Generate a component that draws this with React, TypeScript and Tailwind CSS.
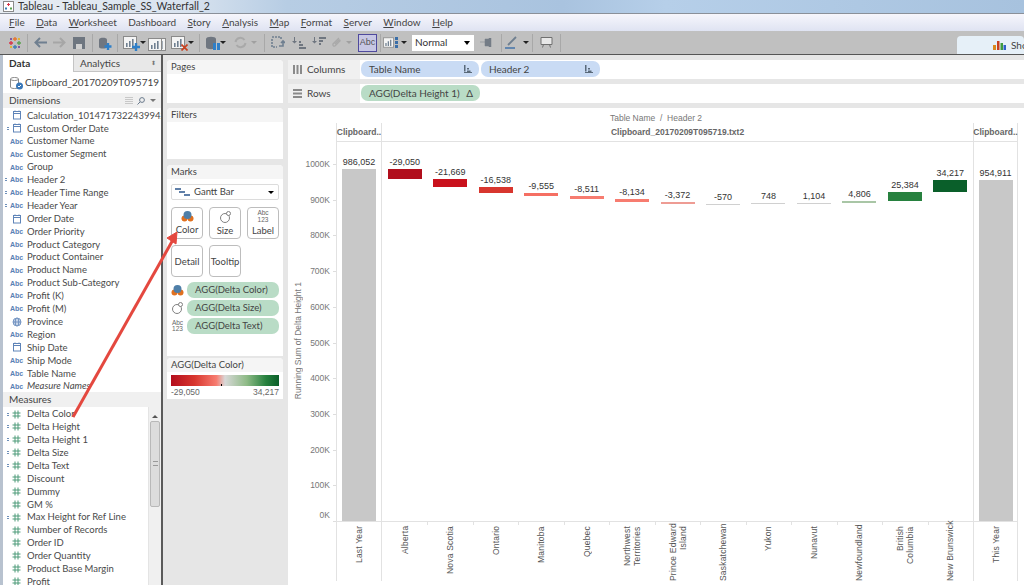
import type { ReactNode } from 'react'

const sans = "font-['Lato','Open_Sans',sans-serif]"
const arial = "font-['Liberation_Sans',Arial,sans-serif]"

const menu = ['File', 'Data', 'Worksheet', 'Dashboard', 'Story', 'Analysis', 'Map', 'Format', 'Server', 'Window', 'Help']

type FieldKind = 'date' | 'abc' | 'geo' | 'num'
type Field = { name: string; kind: FieldKind; calc?: boolean; italic?: boolean }

const dimensions: Field[] = [
  { name: 'Calculation_1014717322439942...', kind: 'date' },
  { name: 'Custom Order Date', kind: 'date', calc: true },
  { name: 'Customer Name', kind: 'abc' },
  { name: 'Customer Segment', kind: 'abc' },
  { name: 'Group', kind: 'abc' },
  { name: 'Header 2', kind: 'abc', calc: true },
  { name: 'Header Time Range', kind: 'abc', calc: true },
  { name: 'Header Year', kind: 'abc', calc: true },
  { name: 'Order Date', kind: 'date' },
  { name: 'Order Priority', kind: 'abc' },
  { name: 'Product Category', kind: 'abc' },
  { name: 'Product Container', kind: 'abc' },
  { name: 'Product Name', kind: 'abc' },
  { name: 'Product Sub-Category', kind: 'abc' },
  { name: 'Profit (K)', kind: 'abc' },
  { name: 'Profit (M)', kind: 'abc' },
  { name: 'Province', kind: 'geo' },
  { name: 'Region', kind: 'abc' },
  { name: 'Ship Date', kind: 'date' },
  { name: 'Ship Mode', kind: 'abc' },
  { name: 'Table Name', kind: 'abc' },
  { name: 'Measure Names', kind: 'abc', italic: true },
]

const measures: Field[] = [
  { name: 'Delta Color', kind: 'num', calc: true },
  { name: 'Delta Height', kind: 'num', calc: true },
  { name: 'Delta Height 1', kind: 'num', calc: true },
  { name: 'Delta Size', kind: 'num', calc: true },
  { name: 'Delta Text', kind: 'num', calc: true },
  { name: 'Discount', kind: 'num' },
  { name: 'Dummy', kind: 'num' },
  { name: 'GM %', kind: 'num' },
  { name: 'Max Height for Ref Line', kind: 'num', calc: true },
  { name: 'Number of Records', kind: 'num' },
  { name: 'Order ID', kind: 'num' },
  { name: 'Order Quantity', kind: 'num' },
  { name: 'Product Base Margin', kind: 'num' },
  { name: 'Profit', kind: 'num' },
]

const provinces = [
  { name: ['Alberta'], value: -29050, label: '-29,050', color: '#b10e1c' },
  { name: ['Nova Scotia'], value: -21669, label: '-21,669', color: '#c9111c' },
  { name: ['Ontario'], value: -16538, label: '-16,538', color: '#d8362e' },
  { name: ['Manitoba'], value: -9555, label: '-9,555', color: '#f56f63' },
  { name: ['Quebec'], value: -8511, label: '-8,511', color: '#f77c70' },
  { name: ['Northwest', 'Territories'], value: -8134, label: '-8,134', color: '#f77c70' },
  { name: ['Prince Edward', 'Island'], value: -3372, label: '-3,372', color: '#ee9c94' },
  { name: ['Saskatchewan'], value: -570, label: '-570', color: '#d0d0d0' },
  { name: ['Yukon'], value: 748, label: '748', color: '#d0d0d0' },
  { name: ['Nunavut'], value: 1104, label: '1,104', color: '#d0d0d0' },
  { name: ['Newfoundland'], value: 4806, label: '4,806', color: '#a9c6a6' },
  { name: ['British', 'Columbia'], value: 25384, label: '25,384', color: '#27813f' },
  { name: ['New Brunswick'], value: 34217, label: '34,217', color: '#0a5f2a' },
]

const axisTicks = [1000, 900, 800, 700, 600, 500, 400, 300, 200, 100, 0]

// plot is 379px tall, 100K is 35.7px
const yOf = (v: number) => 379 - v * 0.000357

function DateIcon() {
  return (
    <svg width="10" height="10" viewBox="0 0 10 10" fill="none" stroke="#5f84b8">
      <rect x="1.5" y="1.5" width="7" height="7.5" />
      <path d="M1.5 3.5h7M3 .5v1.5M7 .5v1.5" />
    </svg>
  )
}

function GeoIcon() {
  return (
    <svg width="10" height="10" viewBox="0 0 10 10" fill="#c8d6ea" stroke="#5f84b8" strokeWidth=".8">
      <circle cx="5" cy="5" r="4" />
      <ellipse cx="5" cy="5" rx="1.8" ry="4" />
      <path d="M1 5h8" />
    </svg>
  )
}

function HashIcon() {
  return (
    <svg width="9" height="9" viewBox="0 0 9 9" fill="none" stroke="#4d9a78">
      <path d="M3 .5v8M6 .5v8M.5 3h8M.5 6h8" />
    </svg>
  )
}

function FieldRow({ field }: { field: Field }) {
  const isAbc = field.kind === 'abc'
  return (
    <li className="flex h-[12.9px] items-center">
      <span className="relative flex w-[24px] shrink-0 items-center justify-center pl-[3px]">
        {field.calc && (
          <span className={`absolute flex flex-col gap-px ${isAbc ? 'left-[2px]' : 'left-[4px]'}`}>
            <span className="h-px w-[2px] bg-[#6d8fb9]" />
            <span className="h-px w-[2px] bg-[#6d8fb9]" />
          </span>
        )}
        {field.kind === 'date' && <DateIcon />}
        {field.kind === 'geo' && <GeoIcon />}
        {field.kind === 'num' && <HashIcon />}
        {isAbc && <span className={`${arial} text-[7px] font-bold leading-none text-[#5a7fb5]`}>Abc</span>}
      </span>
      <span className={`whitespace-nowrap text-[9.5px] leading-none text-[#4a4a4a] ${field.italic ? 'italic' : ''}`}>
        {field.name}
      </span>
    </li>
  )
}

function Caret() {
  return <span className="ml-[3px] h-0 w-0 border-x-[3px] border-t-[3px] border-x-transparent border-t-[#222]" />
}

function Sep() {
  return <span className="mx-[2.5px] h-[18px] w-px shrink-0 bg-[#a8a8a8]" />
}

function Slot({ w, children }: { w: number; children?: ReactNode }) {
  return (
    <span className="flex shrink-0 items-center justify-center" style={{ width: w }}>
      {children}
    </span>
  )
}

function ChartGlyph({ color = '#6f7f90', frame = true }: { color?: string; frame?: boolean }) {
  return (
    <svg width="14" height="13" viewBox="0 0 14 13">
      {frame && <rect x=".5" y=".5" width="13" height="12" fill="#f4f4f4" stroke="#8a8a8a" />}
      <path d="M3 11V7h1.6v4zM6 11V5h1.6v6zM9 11V3h1.6v8z" fill={color} />
    </svg>
  )
}

function Toolbar() {
  return (
    <div className="flex h-[23px] items-center bg-[#c0c0c0] pl-[6px]">
      <Slot w={18}>
        <svg width="14" height="14" viewBox="0 0 14 14" strokeWidth="1.3">
          <path d="M7 1v4M5 3h4" stroke="#e8762b" />
          <path d="M7 9v4M5 11h4" stroke="#3a7db5" />
          <path d="M3 5v4M1 7h4" stroke="#d8344a" />
          <path d="M11 5v4M9 7h4" stroke="#59a14f" />
          <path d="M3 2v2M2 3h2M11 10v2M10 11h2" stroke="#7a4fa0" />
          <path d="M11 2v2M10 3h2M3 10v2M2 11h2" stroke="#e2b32d" />
        </svg>
      </Slot>
      <Sep />
      <Slot w={20}>
        <svg width="13" height="11" viewBox="0 0 13 11" fill="none" stroke="#6f7f90" strokeWidth="2">
          <path d="M13 5.5H2M6 1 1.5 5.5 6 10" />
        </svg>
      </Slot>
      <Slot w={19}>
        <svg width="13" height="11" viewBox="0 0 13 11" fill="none" stroke="#a6a6a6" strokeWidth="2">
          <path d="M0 5.5h11M7 1l4.5 4.5L7 10" />
        </svg>
      </Slot>
      <Slot w={20}>
        <svg width="12" height="12" viewBox="0 0 12 12">
          <rect width="12" height="12" fill="#6e7680" />
          <rect x="3" y="7" width="6" height="5" fill="#d0d0d0" />
        </svg>
      </Slot>
      <Sep />
      <Slot w={19}>
        <svg width="14" height="14" viewBox="0 0 14 14">
          <path d="M1 3.5C1 1 9 1 9 3.5V11C9 13 1 13 1 11z" fill="#6f7680" />
          <path d="M10 7v7M6.5 10.5h7" stroke="#2f7fc8" strokeWidth="2.4" />
        </svg>
      </Slot>
      <Sep />
      <Slot w={28}>
        <span className="relative flex">
          <ChartGlyph />
          <svg className="absolute -right-[3px] -bottom-[2px]" width="8" height="8" viewBox="0 0 8 8">
            <path d="M4 0v8M0 4h8" stroke="#2f7fc8" strokeWidth="2.4" />
          </svg>
        </span>
        <Caret />
      </Slot>
      <Slot w={21}>
        <span className="relative flex pt-[3px]">
          <ChartGlyph />
          <span className="absolute -left-[4px] bottom-0 flex">
            <ChartGlyph />
          </span>
        </span>
      </Slot>
      <Slot w={27}>
        <span className="relative flex">
          <ChartGlyph />
          <svg className="absolute -right-[3px] -bottom-[2px]" width="7" height="7" viewBox="0 0 7 7">
            <path d="M.5.5l6 6M6.5.5l-6 6" stroke="#c8401e" strokeWidth="1.6" />
          </svg>
        </span>
        <Caret />
      </Slot>
      <Sep />
      <Slot w={27}>
        <span className="relative flex">
          <svg width="11" height="14" viewBox="0 0 11 14">
            <path d="M0 3C0 0 10 0 10 3v8c0 3-10 3-10 0z" fill="#6f7680" />
          </svg>
          <span className="absolute -right-[3px] bottom-0 flex gap-px">
            <span className="h-[7px] w-[3px] bg-[#2f7fc8]" />
            <span className="h-[7px] w-[3px] bg-[#2f7fc8]" />
          </span>
        </span>
        <Caret />
      </Slot>
      <Slot w={22}>
        <svg width="13" height="13" viewBox="0 0 13 13" fill="none" stroke="#a9a9a9" strokeWidth="2">
          <path d="M1.5 6a5 5 0 0 1 9-2M11.5 7a5 5 0 0 1-9 2" />
        </svg>
      </Slot>
      <span className="w-[10px]">
        <span className="block h-0 w-0 border-x-[3px] border-t-[3px] border-x-transparent border-t-[#a0a0a0]" />
      </span>
      <Sep />
      <Slot w={22}>
        <svg width="14" height="13" viewBox="0 0 14 13" fill="none" stroke="#6f7f90" strokeWidth="1.6">
          <path d="M1 1h9v2M1 3v8h5" strokeDasharray="2 1" />
          <path d="M8 10h4V5M10 7l2-2 2 2" />
        </svg>
      </Slot>
      <Slot w={20}>
        <svg width="14" height="12" viewBox="0 0 14 12" fill="#6f7680">
          <path d="M2 0h1v4h2L2.5 6.5 0 4h2zM7 4h2v2H7zM7 7h4v2H7zM7 10h7v2H7z" />
        </svg>
      </Slot>
      <Slot w={20}>
        <svg width="14" height="12" viewBox="0 0 14 12" fill="#6f7680">
          <path d="M2 0h1v4h2L2.5 6.5 0 4h2zM7 0h7v2H7zM7 3h4v2H7zM7 6h2v2H7z" />
        </svg>
      </Slot>
      <Slot w={14}>
        <svg width="11" height="12" viewBox="0 0 11 12" fill="none" stroke="#a9a9a9" strokeWidth="1.3">
          <path d="M8 1 2 7a1.5 1.5 0 0 0 2 2l5-5a.8.8 0 0 0-1-1L4 7" />
        </svg>
      </Slot>
      <span className="ml-[3px] w-[12px]">
        <span className="block h-0 w-0 border-x-[3px] border-t-[3px] border-x-transparent border-t-[#a0a0a0]" />
      </span>
      <span
        className={`${arial} flex h-[18px] w-[19px] shrink-0 items-center justify-center border border-[#4f4a9e] bg-[#c7c7e4] text-[9px] text-[#555]`}
      >
        Abc
      </span>
      <Sep />
      <Slot w={24}>
        <ChartGlyph />
        <span className="ml-px grid gap-px">
          <span className="h-[3px] w-[3px] bg-[#3a6ea8]" />
          <span className="h-[3px] w-[3px] bg-[#3a6ea8]" />
          <span className="h-[3px] w-[3px] bg-[#3a6ea8]" />
        </span>
        <Caret />
      </Slot>
      <span
        className={`${sans} ml-[5px] flex h-[16px] w-[62px] shrink-0 items-center justify-between bg-white pl-[3px] pr-[4px] text-[10px] text-[#333]`}
      >
        Normal
        <span className="h-0 w-0 border-x-[3.5px] border-t-[4px] border-x-transparent border-t-black" />
      </span>
      <Slot w={24}>
        <svg width="13" height="9" viewBox="0 0 13 9">
          <path d="M0 4h5M9 0h2v9H9zM5 1h4v7H5z" fill="#747c86" stroke="#747c86" strokeWidth=".5" />
        </svg>
      </Slot>
      <Sep />
      <Slot w={16}>
        <svg width="14" height="13" viewBox="0 0 14 13" fill="none" stroke="#6f7f90" strokeWidth="1.8">
          <path d="M3 9 11 1" />
          <path d="M0 12h10" stroke="#3a6ea8" strokeWidth="1.4" />
        </svg>
      </Slot>
      <Caret />
      <Sep />
      <Slot w={22}>
        <svg width="13" height="13" viewBox="0 0 13 13" fill="#e8e8e8" stroke="#707070">
          <path d="M1 1.5h11v7H1zM3.5 8.5l-1 3M9.5 8.5l1 3" />
        </svg>
      </Slot>
      <Sep />
      <div className="ml-auto flex h-[18px] w-[67px] items-end self-end">
        <div className="flex h-full w-full items-center justify-end gap-[5px] rounded-t-[4px] bg-[#e6f0f8] pl-2">
          <svg width="13" height="9" viewBox="0 0 13 9">
            <rect x="0" y="4" width="3" height="5" fill="#d98a1f" />
            <rect x="4" y="0" width="2.5" height="9" fill="#c9401f" />
            <rect x="7.5" y="2" width="2.5" height="7" fill="#3f9a3f" />
            <rect x="10.5" y="4" width="2.5" height="5" fill="#2f5fc8" />
          </svg>
          <span className={`${sans} w-[13px] overflow-hidden text-[10px] text-[#444]`}>Sho</span>
        </div>
      </div>
    </div>
  )
}

function DataPanel() {
  return (
    <aside className={`${sans} flex w-[161px] shrink-0 flex-col border-l-[3px] border-[#b8c2cf] bg-white`}>
      <div className="flex h-[17px] shrink-0 text-[10px] text-[#444]">
        <div className="flex w-[70px] items-center bg-white pl-[6px] font-bold text-[#333]">Data</div>
        <div className="flex flex-1 items-center justify-between border-b border-l border-[#c4c4c4] bg-[#e8e8e8] pl-[6px] pr-[5px]">
          Analytics
          <span className="text-[6px] leading-none text-[#777]">⬍</span>
        </div>
      </div>
      <div className="flex h-[21px] shrink-0 items-center gap-px pl-[6px] text-[10px] text-[#444]">
        <svg width="15" height="14" viewBox="0 0 15 14">
          <path d="M1.5 3C1.5 1 9.5 1 9.5 3v8c0 2-8 2-8 0z" fill="#fff" stroke="#8a8a8a" />
          <path d="M1.5 3c0 2 8 2 8 0" fill="none" stroke="#8a8a8a" />
          <circle cx="10.5" cy="10" r="3.5" fill="#3a78b8" />
          <path d="M9 10l1 1 2-2" fill="none" stroke="#fff" />
        </svg>
        Clipboard_20170209T095719
      </div>
      <div className="flex h-[15px] shrink-0 items-center justify-between bg-[#f0f0f0] pl-[6px] pr-[5px] text-[10px] text-[#444]">
        Dimensions
        <span className="flex items-center gap-[3px]">
          <svg width="9" height="7" viewBox="0 0 9 7" stroke="#a0a0a0">
            <path d="M1 0v7M3 0v7M5 0v7M7 0v7" strokeDasharray="1 1" />
          </svg>
          <svg width="8" height="8" viewBox="0 0 8 8" fill="none" stroke="#6a7a8c">
            <circle cx="5" cy="3" r="2.4" />
            <path d="M3 5 .5 7.5" />
          </svg>
          <span className="ml-[2px] h-0 w-0 border-x-[3px] border-t-[3px] border-x-transparent border-t-[#777]" />
        </span>
      </div>
      <ul className="shrink-0 pt-px">
        {dimensions.map((f) => (
          <FieldRow key={f.name} field={f} />
        ))}
      </ul>
      <div className="mt-[-1px] flex h-[15px] shrink-0 items-center bg-[#f0f0f0] pl-[6px] text-[10px] text-[#444]">
        Measures
      </div>
      <div className="flex min-h-0 flex-1">
        <ul className="flex-1 pt-px">
          {measures.map((f) => (
            <FieldRow key={f.name} field={f} />
          ))}
        </ul>
        <div className="flex w-[13px] flex-col items-center border-l border-[#e4e4e4] bg-[#f0f0f0] pt-[8px]">
          <span className="h-0 w-0 border-x-[3px] border-b-[3px] border-x-transparent border-b-[#555]" />
          <span className="mt-[3px] flex h-[86px] w-[10px] items-center justify-center rounded-[2px] border border-[#b8b8b8] bg-[#dcdcdc]">
            <span className="h-[5px] w-[5px] border-y border-[#999]" />
          </span>
        </div>
      </div>
    </aside>
  )
}

function Card({ title, className, children }: { title: string; className: string; children?: ReactNode }) {
  return (
    <section className={`flex shrink-0 flex-col overflow-hidden rounded-t-[4px] bg-white ${className}`}>
      <h3 className="flex h-[14px] shrink-0 items-center bg-[#f5f5f5] pl-[4px] text-[9.5px] font-normal text-[#444]">
        {title}
      </h3>
      {children}
    </section>
  )
}

function MarkButton({ label, children }: { label: string; children?: ReactNode }) {
  return (
    <div className="flex h-[32px] w-[32px] flex-col items-center justify-center gap-[2px] rounded-[4px] border border-[#bdbdbd] bg-white text-[9.5px] leading-[11px] text-[#444]">
      {children}
      {label}
    </div>
  )
}

function ColorIcon() {
  return (
    <svg width="13" height="11" viewBox="0 0 13 11" className="shrink-0">
      <circle cx="3.5" cy="7.5" r="3" fill="#e0701f" />
      <circle cx="9.5" cy="7.5" r="3" fill="#e0701f" />
      <circle cx="6.5" cy="4" r="4" fill="#4f7fa8" />
    </svg>
  )
}

function SizeIcon() {
  return (
    <svg width="13" height="12" viewBox="0 0 13 12" fill="#fff" stroke="#808080" className="shrink-0">
      <circle cx="6" cy="7" r="4.5" />
      <circle cx="9.5" cy="2.5" r="2" />
    </svg>
  )
}

function LabelIcon() {
  return (
    <span className={`${arial} shrink-0 text-center text-[6.5px] leading-[6.5px] text-[#666]`}>
      Abc
      <br />
      123
    </span>
  )
}

function Pill({ icon, label }: { icon: ReactNode; label: string }) {
  return (
    <div className="flex h-[16px] items-center gap-[3px]">
      <span className="flex w-[13px] shrink-0 justify-center">{icon}</span>
      <span className="flex h-full flex-1 items-center rounded-[7px] bg-[#b9dcc6] pl-[8px] text-[9.5px] text-[#444]">
        {label}
      </span>
    </div>
  )
}

function Cards() {
  return (
    <div className={`${sans} flex w-[127px] shrink-0 flex-col border-l-2 border-[#5a5a5a] bg-[#e6e6e6] pl-[4px] pr-[5px] pt-[5px]`}>
      <Card title="Pages" className="h-[43px]" />
      <Card title="Filters" className="mt-[5px] h-[51px]" />
      <Card title="Marks" className="mt-[6px] h-[191px]">
        <div className="px-[4px] pt-[5px]">
          <div className="flex h-[16px] items-center justify-between rounded-[2px] border border-[#dcdcdc] pl-[3px] pr-[4px] text-[9.5px] text-[#444]">
            <span className="flex items-center gap-[4px]">
              <svg width="15" height="8" viewBox="0 0 15 8" fill="#5f7fa8">
                <path d="M0 0h6v2H0zM4 3h6v2H4zM9 6h6v2H9z" />
              </svg>
              Gantt Bar
            </span>
            <span className="h-0 w-0 border-x-[3px] border-t-[3px] border-x-transparent border-t-black" />
          </div>
          <div className="mt-[7px] grid grid-cols-[32px_32px_32px] gap-x-[6px] gap-y-[6px]">
            <MarkButton label="Color">
              <ColorIcon />
            </MarkButton>
            <MarkButton label="Size">
              <SizeIcon />
            </MarkButton>
            <MarkButton label="Label">
              <LabelIcon />
            </MarkButton>
            <MarkButton label="Detail" />
            <MarkButton label="Tooltip" />
          </div>
          <div className="mt-[5px] flex flex-col gap-[2px]">
            <Pill icon={<ColorIcon />} label="AGG(Delta Color)" />
            <Pill icon={<SizeIcon />} label="AGG(Delta Size)" />
            <Pill icon={<LabelIcon />} label="AGG(Delta Text)" />
          </div>
        </div>
      </Card>
      <Card title="AGG(Delta Color)" className="mt-[2px] h-[41px]">
        <div className="px-[4px] pt-[3px]">
          <div className="relative h-[11px] bg-[linear-gradient(to_right,#b30d1c_0%,#d8362e_22%,#f77c70_42%,#d8d8d8_50%,#8fbb87_70%,#27813f_88%,#0a5f2a_100%)]">
            <span className="absolute bottom-0 left-[50px] h-[2px] w-px bg-black" />
          </div>
          <div className={`${arial} flex justify-between pt-[2px] text-[8.5px] leading-[9px] text-[#666]`}>
            <span>-29,050</span>
            <span>34,217</span>
          </div>
        </div>
      </Card>
    </div>
  )
}

function Shelf({ label, icon, children }: { label: string; icon: ReactNode; children: ReactNode }) {
  return (
    <div className="flex h-[19px] shrink-0">
      <div className="flex w-[72px] shrink-0 items-center gap-[5px] bg-[#f0f0f0] pl-[5px] text-[10px] text-[#444]">
        {icon}
        {label}
      </div>
      <div className="flex flex-1 items-start gap-[2px] bg-white pl-px pt-px">{children}</div>
    </div>
  )
}

function ShelfPill({ label, w, green, mark }: { label: string; w: string; green?: boolean; mark: ReactNode }) {
  return (
    <span
      className={`flex h-[16px] items-center justify-between rounded-[7px] pl-[8px] pr-[7px] text-[10px] text-[#444] ${w} ${green ? 'bg-[#b9dcc6]' : 'bg-[#c9dbf4]'}`}
    >
      {label}
      {mark}
    </span>
  )
}

function SortMark() {
  return (
    <svg width="8" height="8" viewBox="0 0 8 8" fill="#5a6a7a">
      <path d="M0 0h1.5v6.5H0zM3 3h2v1.5H3zM3 5.500h3.500V7H3z" />
      <path d="M0 7h8v1H0z" />
    </svg>
  )
}

function Bar({ top, height, color, label }: { top: number; height: number; color: string; label: string }) {
  return (
    <>
      <span
        className="absolute left-0 right-0 text-center text-[9px] leading-[10px] text-[#333]"
        style={{ top: top - 12 }}
      >
        {label}
      </span>
      <span
        className="absolute left-1/2 w-[34px] -translate-x-1/2"
        style={{ top, height: Math.max(height, 1), backgroundColor: color }}
      />
    </>
  )
}

function VerticalLabel({ lines }: { lines: string[] }) {
  return (
    <span className="flex h-full w-full justify-center pt-[4px]">
      <span className="rotate-180 text-right text-[8.5px] leading-[10px] tracking-[0.2px] text-[#555] [writing-mode:vertical-rl]">
        {lines.map((l) => (
          <span key={l} className="block whitespace-nowrap">
            {l}
          </span>
        ))}
      </span>
    </span>
  )
}

function Chart() {
  let running = 986052
  const bars = provinces.map((p) => {
    const from = running
    running += p.value
    const top = yOf(Math.max(from, running))
    return { ...p, top, height: yOf(Math.min(from, running)) - top }
  })

  return (
    <div className={`${arial} mt-[5px] flex min-h-0 flex-1 flex-col bg-white`}>
      <div className="flex h-[15px] shrink-0 items-end justify-center text-[8.5px] leading-[10px] text-[#777]">
        Table Name &nbsp;/&nbsp; Header 2
      </div>
      <div className="flex h-[19px] shrink-0">
        <div className="w-[48px] shrink-0" />
        <div className="flex flex-1 border-b border-[#e2e2e2] text-[8.5px] font-bold text-[#666]">
          <div className="flex w-[45px] shrink-0 items-center justify-center border-l border-[#e2e2e2]">Clipboard..</div>
          <div className="flex w-[592px] shrink-0 items-center justify-center border-l border-[#e2e2e2]">
            Clipboard_20170209T095719.txt2
          </div>
          <div className="flex w-[45px] shrink-0 items-center justify-center border-x border-[#e2e2e2]">Clipboard..</div>
        </div>
        <div className="w-[6px] shrink-0" />
      </div>
      <div className="flex h-[379px] shrink-0">
        <div className="relative w-[48px] shrink-0 text-[8.5px] leading-[10px] text-[#777]">
          <span className="absolute left-[5px] top-[140px] rotate-180 whitespace-nowrap text-[8.5px] leading-[10px] [writing-mode:vertical-rl]">
            Running Sum of Delta Height 1
          </span>
          {axisTicks.map((t) => {
            const y = yOf(t * 1000)
            return (
              <span key={t}>
                <span className="absolute right-[6px]" style={{ top: t === 0 ? y - 11 : y - 5 }}>
                  {t}K
                </span>
                <span className="absolute right-0 h-px w-[3px] bg-[#ddd]" style={{ top: y }} />
              </span>
            )
          })}
        </div>
        <div className="flex flex-1">
          <div className="relative w-[45px] shrink-0 border-l border-[#e2e2e2]">
            <Bar top={yOf(986052)} height={379 - yOf(986052)} color="#c8c8c8" label="986,052" />
          </div>
          <div className="flex w-[592px] shrink-0 border-l border-[#e2e2e2]">
            {bars.map((b) => (
              <div key={b.label} className="relative flex-1">
                <Bar top={b.top} height={b.height} color={b.color} label={b.label} />
              </div>
            ))}
          </div>
          <div className="relative w-[45px] shrink-0 border-x border-[#e2e2e2]">
            <Bar top={yOf(954911)} height={379 - yOf(954911)} color="#c8c8c8" label="954,911" />
          </div>
        </div>
        <div className="w-[6px] shrink-0" />
      </div>
      <div className="flex h-[60px] shrink-0">
        <div className="w-[45px] shrink-0" />
        <div className="flex flex-1 border-t border-[#e2e2e2]">
          <div className="w-[3px] shrink-0" />
          <div className="w-[45px] shrink-0 border-l border-[#e2e2e2]">
            <VerticalLabel lines={['Last Year']} />
          </div>
          <div className="flex w-[592px] shrink-0 border-l border-[#e2e2e2]">
            {provinces.map((p, i) => (
              <div key={p.label} className="relative flex-1">
                {i > 0 && <span className="absolute left-0 top-0 h-[3px] w-px bg-[#e2e2e2]" />}
                <VerticalLabel lines={p.name} />
              </div>
            ))}
          </div>
          <div className="w-[45px] shrink-0 border-x border-[#e2e2e2]">
            <VerticalLabel lines={['This Year']} />
          </div>
        </div>
        <div className="w-[6px] shrink-0" />
      </div>
    </div>
  )
}

export default function App() {
  return (
    <div className="relative flex h-[585px] w-[1024px] flex-col overflow-hidden bg-[#e6e6e6]">
      <header
        className={`${sans} flex h-[14px] shrink-0 items-center gap-[4px] border-b border-[#8a9099] bg-[linear-gradient(to_right,#e8edf3_0%,#d9e3ef_18%,#b7cde4_28%,#a9c3df_55%,#b6cfe9_65%,#a7c2de_100%)] pl-[3px] text-[10.5px] text-[#333]`}
      >
        <svg width="11" height="11" viewBox="0 0 11 11" fill="none" strokeWidth="1">
          <rect x=".5" y=".5" width="10" height="10" fill="#fff" stroke="#8a8a8a" />
          <path d="M5.500 2v3M4 3.500h3" stroke="#d8344a" />
          <path d="M3 6v3M2 7.500h2" stroke="#3a7db5" />
          <path d="M8 6v3M7 7.500h2" stroke="#59a14f" />
        </svg>
        Tableau - Tableau_Sample_SS_Waterfall_2
      </header>
      <nav
        className={`${sans} flex h-[17px] shrink-0 items-center gap-[11.5px] bg-[linear-gradient(to_bottom,#f6f6fc,#dfe3f2)] pl-[9px] text-[10px] text-[#444]`}
      >
        {menu.map((m, i) => (
          <span key={m}>
            <span className={i === 3 ? '' : 'underline decoration-[0.5px] underline-offset-1'}>{m[0]}</span>
            {m.slice(1)}
          </span>
        ))}
      </nav>
      <Toolbar />
      <div className="h-px shrink-0 bg-[#555]" />
      <div className="flex min-h-0 flex-1">
        <DataPanel />
        <Cards />
        <main className={`${sans} flex min-w-0 flex-1 flex-col pt-[5px]`}>
          <Shelf
            label="Columns"
            icon={
              <svg width="9" height="9" viewBox="0 0 9 9" fill="#8a8a8a">
                <path d="M0 0h2v9H0zM3.500 0h2v9h-2zM7 0h2v9H7z" />
              </svg>
            }
          >
            <ShelfPill label="Table Name" w="w-[118px]" mark={<SortMark />} />
            <ShelfPill label="Header 2" w="w-[119px]" mark={<SortMark />} />
          </Shelf>
          <div className="mt-[5px]">
            <Shelf
              label="Rows"
              icon={
                <svg width="9" height="9" viewBox="0 0 9 9" fill="#8a8a8a">
                  <path d="M0 0h9v2H0zM0 3.500h9v2H0zM0 7h9v2H0z" />
                </svg>
              }
            >
              <ShelfPill label="AGG(Delta Height 1)" w="w-[119px]" green mark={<span>Δ</span>} />
            </Shelf>
          </div>
          <Chart />
        </main>
      </div>
      {/* annotation arrow from the screenshot */}
      <svg className="pointer-events-none absolute inset-0" width="1024" height="585" viewBox="0 0 1024 585">
        <path d="M73 417 174 238" stroke="#e4483f" strokeWidth="3" fill="none" />
        <path d="M177 232 167 238 176 244z" fill="#e4483f" stroke="#e4483f" />
      </svg>
    </div>
  )
}
